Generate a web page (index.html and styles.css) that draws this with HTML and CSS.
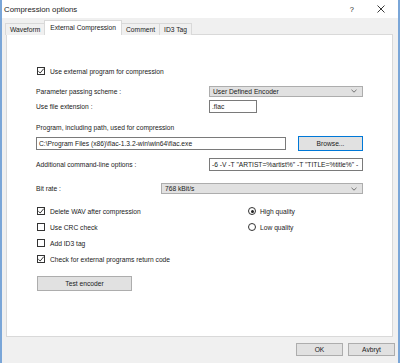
FILE: index.html
```html
<!DOCTYPE html>
<html lang="en">
<head>
    <meta charset="UTF-8">
    <title>Compression options</title>
    <link rel="stylesheet" href="styles.css">
</head>
<body>
    <div class="window">
        <div class="titlebar">
            <span class="title">Compression options</span>
            <span class="help">?</span>
            <svg class="close" width="8" height="8" viewBox="0 0 8 8"><path d="M0.5 0.5L7.5 7.5M7.5 0.5L0.5 7.5" stroke="#222" stroke-width="0.9"/></svg>
        </div>

        <div class="tabs">
            <div class="tab">Waveform</div>
            <div class="tab active">External Compression</div>
            <div class="tab">Comment</div>
            <div class="tab">ID3 Tag</div>
        </div>

        <div class="panel">
            <div class="row first">
                <span class="check on"><svg width="8" height="8" viewBox="0 0 8 8"><path d="M1.3 4.2L3.2 6L6.8 1.6" fill="none" stroke="#222" stroke-width="0.9"/></svg></span>
                <span>Use external program for compression</span>
            </div>

            <div class="row gap-8">
                <label class="label wide">Parameter passing scheme :</label>
                <div class="select">
                    <span>User Defined Encoder</span>
                    <svg width="6" height="4" viewBox="0 0 6 4"><path d="M0.5 0.8L3 3.2L5.5 0.8" fill="none" stroke="#555" stroke-width="0.8"/></svg>
                </div>
            </div>

            <div class="row tall gap-3">
                <label class="label wide">Use file extension :</label>
                <div class="input ext">.flac</div>
            </div>

            <div class="row gap-8">
                <label class="label">Program, including path, used for compression</label>
            </div>

            <div class="row tallest gap-3">
                <div class="input path">C:\Program Files (x86)\flac-1.3.2-win\win64\flac.exe</div>
                <button class="btn browse">Browse...</button>
            </div>

            <div class="row tall gap-7">
                <label class="label wide">Additional command-line options :</label>
                <div class="input grow">-6 -V -T "ARTIST=%artist%" -T "TITLE=%title%" -</div>
            </div>

            <div class="row tall gap-11">
                <label class="label bitrate">Bit rate :</label>
                <div class="select">
                    <span>768 kBit/s</span>
                    <svg width="6" height="4" viewBox="0 0 6 4"><path d="M0.5 0.8L3 3.2L5.5 0.8" fill="none" stroke="#555" stroke-width="0.8"/></svg>
                </div>
            </div>

            <div class="options">
                <div class="opt-col">
                    <div class="row">
                        <span class="check on"><svg width="8" height="8" viewBox="0 0 8 8"><path d="M1.3 4.2L3.2 6L6.8 1.6" fill="none" stroke="#222" stroke-width="0.9"/></svg></span>
                        <span>Delete WAV after compression</span>
                    </div>
                    <div class="row">
                        <span class="check"></span>
                        <span>Use CRC check</span>
                    </div>
                    <div class="row">
                        <span class="check"></span>
                        <span>Add ID3 tag</span>
                    </div>
                    <div class="row">
                        <span class="check on"><svg width="8" height="8" viewBox="0 0 8 8"><path d="M1.3 4.2L3.2 6L6.8 1.6" fill="none" stroke="#222" stroke-width="0.9"/></svg></span>
                        <span>Check for external programs return code</span>
                    </div>
                </div>
                <div class="opt-col">
                    <div class="row">
                        <span class="radio on"></span>
                        <span>High quality</span>
                    </div>
                    <div class="row">
                        <span class="radio"></span>
                        <span>Low quality</span>
                    </div>
                </div>
            </div>

            <div class="row tallest gap-11">
                <button class="btn test">Test encoder</button>
            </div>
        </div>

        <div class="footer">
            <button class="btn dlg">OK</button>
            <button class="btn dlg">Avbryt</button>
        </div>
    </div>
</body>
</html>
```

FILE: styles.css
```css
body {
    margin: 0;
    font-family: "Liberation Sans", Arial, sans-serif;
    font-size: 6.7px;
    color: #1a1a1a;
    background-color: #6f9fd4;
}
.window {
    width: 400px;
    height: 363px;
    box-sizing: border-box;
    border-left: 2px solid #7aa6d8;
    border-right: 2px solid #7aa6d8;
    background-color: #f0f0f0;
}
.titlebar {
    height: 18px;
    background-color: #fff;
    display: flex;
    align-items: center;
    padding-left: 2px;
    padding-right: 13px;
}
.title {
    flex: 1;
    font-size: 7.8px;
    color: #222;
}
.help {
    font-size: 7.5px;
    margin-right: 23px;
}
.close {
    display: block;
}
.tabs {
    display: flex;
    align-items: flex-end;
    height: 17px;
    padding-left: 4px;
    margin-bottom: -1px;
}
.tab {
    height: 11px;
    line-height: 11px;
    padding: 0 4px;
    border: 1px solid #d9d9d9;
    border-bottom: none;
    background-color: #f0f0f0;
    margin-left: -1px;
}
.tab.active {
    height: 14px;
    line-height: 13px;
    background-color: #fff;
    position: relative;
    z-index: 1;
    padding: 0 5px;
}
.panel {
    margin: 0 5px 0 4px;
    height: 303px;
    box-sizing: border-box;
    background-color: #fff;
    border: 1px solid #d9d9d9;
    padding: 0 29px;
}
.row {
    display: flex;
    align-items: center;
    height: 12px;
}
.row.tall {
    height: 13px;
}
.row.tallest {
    height: 15px;
}
.first {
    margin-top: 30px;
}
.gap-3 { margin-top: 3px; }
.gap-7 { margin-top: 7px; }
.gap-8 { margin-top: 8px; }
.gap-11 { margin-top: 11px; }
.label.wide {
    width: 173px;
}
.label.bitrate {
    width: 125px;
}
.select {
    flex: 1;
    height: 11px;
    box-sizing: border-box;
    border: 1px solid #adadad;
    background-color: #e1e1e1;
    display: flex;
    align-items: center;
    justify-content: space-between;
    padding: 0 5px 0 3px;
}
.select svg {
    display: block;
}
.input {
    height: 13px;
    line-height: 11px;
    box-sizing: border-box;
    border: 1px solid #7a7a7a;
    background-color: #fff;
    padding: 0 2px;
    white-space: nowrap;
    overflow: hidden;
}
.input.ext {
    width: 48px;
}
.input.path {
    width: 250px;
}
.input.grow {
    flex: 1;
}
.btn {
    font-family: inherit;
    font-size: 6.7px;
    color: #1a1a1a;
    background-color: #e1e1e1;
    border: 1px solid #adadad;
    padding: 0;
    height: 15px;
}
.browse {
    width: 65px;
    margin-left: 12px;
    border-color: #0078d7;
}
.test {
    width: 95px;
    margin-left: 1px;
}
.check {
    width: 8px;
    height: 8px;
    box-sizing: border-box;
    border: 1px solid #333;
    margin: 0 5px 0 1px;
    display: flex;
    align-items: center;
    justify-content: center;
}
.check svg {
    display: block;
    flex-shrink: 0;
}
.radio {
    width: 8px;
    height: 8px;
    box-sizing: border-box;
    border: 1px solid #333;
    border-radius: 50%;
    margin-right: 4px;
    position: relative;
}
.radio.on::after {
    content: "";
    position: absolute;
    left: 1.5px;
    top: 1.5px;
    width: 3px;
    height: 3px;
    border-radius: 50%;
    background-color: #222;
}
.options {
    display: flex;
    margin-top: 10px;
}
.opt-col {
    display: flex;
    flex-direction: column;
    gap: 4px;
}
.opt-col:first-child {
    width: 212px;
}
.footer {
    display: flex;
    justify-content: flex-end;
    gap: 5px;
    padding: 6px 3px 0 0;
}
.dlg {
    width: 47px;
    height: 13px;
}
```
